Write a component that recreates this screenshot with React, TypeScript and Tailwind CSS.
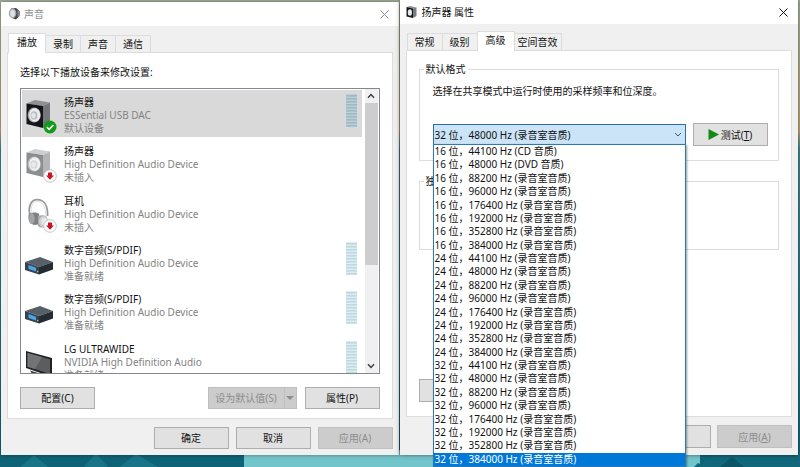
import React from "react";
import clsx from "clsx";

type DeviceKind = "speaker" | "speakerOff" | "headphones" | "box" | "monitor";

type Device = {
  id: number;
  name: string;
  driver: string;
  status: string;
  icon: DeviceKind;
  badge?: "ok" | "unplugged";
  meter?: boolean;
};

const devices: Device[] = [
  { id: 1, name: "扬声器", driver: "ESSential USB DAC", status: "默认设备", icon: "speaker", badge: "ok", meter: true },
  { id: 2, name: "扬声器", driver: "High Definition Audio Device", status: "未插入", icon: "speakerOff", badge: "unplugged" },
  { id: 3, name: "耳机", driver: "High Definition Audio Device", status: "未插入", icon: "headphones", badge: "unplugged" },
  { id: 4, name: "数字音频(S/PDIF)", driver: "High Definition Audio Device", status: "准备就绪", icon: "box", meter: true },
  { id: 5, name: "数字音频(S/PDIF)", driver: "High Definition Audio Device", status: "准备就绪", icon: "box", meter: true },
  { id: 6, name: "LG ULTRAWIDE", driver: "NVIDIA High Definition Audio", status: "准备就绪", icon: "monitor", meter: true },
];

const rates = [44100, 48000, 88200, 96000, 176400, 192000, 352800, 384000];

// 16 位的前两档有专门的音质名称
const qualityOf = (bits: number, rate: number) => {
  if (bits === 16 && rate === 44100) return "CD 音质";
  if (bits === 16 && rate === 48000) return "DVD 音质";
  return "录音室音质";
};

const formats = [16, 24, 32].flatMap((bits) =>
  rates.map((rate) => `${bits} 位，${rate} Hz (${qualityOf(bits, rate)})`)
);

const SpeakerIcon = ({ off }: { off?: boolean }) => (
  <svg viewBox="0 0 32 32" className="h-8 w-8">
    <path d="M0.5 5.5 L9 2 L24 4.5 L17 8Z" fill={off ? "#cfcfcf" : "#8f9194"} />
    <path d="M17 8 L24 4.5 V23 L17 30Z" fill={off ? "#b4b5b7" : "#74777b"} />
    <path d="M0.5 5.5 L17 8 V30 L0.5 26Z" fill={off ? "#8c8d8f" : "#141517"} />
    <ellipse cx="8.2" cy="17" rx="6.6" ry="7.6" fill={off ? "#bdbebf" : "#9fa3a7"} />
    <ellipse cx="8.7" cy="17" rx="5.6" ry="6.8" fill={off ? "#f1f1f1" : "#eceef0"} />
    <ellipse cx="8" cy="17.4" rx="3.4" ry="4.2" fill={off ? "#d3d4d5" : "#b7bbbf"} />
    <ellipse cx="7.6" cy="17.6" rx="2.2" ry="2.8" fill={off ? "#e9e9e9" : "#e2e5e8"} />
  </svg>
);

const HeadphonesIcon = () => (
  <svg viewBox="0 0 32 32" className="h-8 w-8">
    <path d="M4 19 C1.5 8 6 2 12 2.6 C19 3.3 22 10 21.5 19" fill="none" stroke="#999a9b" strokeWidth="1.8" />
    <path d="M5.6 16 C4 9 7.5 4 12 4.4 C17 5 20 11 19.8 19" fill="none" stroke="#dcdcdc" strokeWidth="0.9" />
    <path d="M3 17 C6 15 11 15 13 17 L14 26 C11 29 6 28 4 26 C2 23 2 19 3 17Z" fill="#7f8081" />
    <ellipse cx="5.8" cy="21.5" rx="2.8" ry="5.4" fill="#a3a4a5" />
    <path d="M12 19 C15 17.5 19 18 21 20 L21 29 C18 31 14 31 12 29Z" fill="#a9aaab" />
    <ellipse cx="17.6" cy="24.5" rx="4.6" ry="5.6" fill="#cfd0d1" />
    <ellipse cx="18.2" cy="24.5" rx="2.8" ry="3.8" fill="#e7e7e7" />
  </svg>
);

const BoxIcon = () => (
  <svg viewBox="0 0 32 32" className="h-8 w-8 overflow-visible">
    <path d="M-1 16 L14 11 L27 16 L13 21Z" fill="#566068" />
    <path d="M-1 16 L13 21 V28.5 L-1 24Z" fill="#38424a" />
    <path d="M13 21 L27 16 V23.5 L13 28.5Z" fill="#252b31" />
    <path d="M2.5 19 L10 21.7 V25.4 L2.5 23Z" fill="#4ba6e6" />
    <circle cx="11.6" cy="25.6" r="0.8" fill="#aeb9c1" />
  </svg>
);

const MonitorIcon = () => (
  <svg viewBox="0 0 32 32" className="h-8 w-8">
    <path d="M0 6 L26 13 V32 L0 23Z" fill="#202122" />
    <path d="M1.5 8 L24 14.2 V29 L1.5 21.8Z" fill="#5b5d5f" />
    <path d="M1.5 8 L16 12 L9 24 L1.5 21.8Z" fill="#727476" />
    <path d="M4 25.5 L17 29.5 V32 H8Z" fill="#3a3b3c" />
  </svg>
);

const DeviceIcon = ({ icon }: { icon: DeviceKind }) => {
  const iconMap: Record<DeviceKind, React.ReactNode> = {
    speaker: <SpeakerIcon />,
    speakerOff: <SpeakerIcon off />,
    headphones: <HeadphonesIcon />,
    box: <BoxIcon />,
    monitor: <MonitorIcon />,
  };
  return iconMap[icon];
};

const Badge = ({ kind }: { kind: "ok" | "unplugged" }) => (
  <svg viewBox="0 0 14 14" className="absolute right-px -bottom-1 h-3.5 w-3.5">
    {kind === "ok" ? (
      <>
        <circle cx="7" cy="7" r="6.5" fill="#129a1c" />
        <path d="M3.8 7.2 L6.1 9.4 L10.4 5" fill="none" stroke="#fff" strokeWidth="1.6" />
      </>
    ) : (
      <>
        <circle cx="7" cy="7" r="6.3" fill="#fff" stroke="#b5b5b5" strokeWidth="0.8" />
        <path d="M5 3.4 H9 V6.6 H11 L7 10.8 L3 6.6 H5Z" fill="#cf1220" />
      </>
    )}
  </svg>
);

const Meter = ({ active }: { active?: boolean }) => (
  <svg viewBox="0 0 11 33" className="h-[33px] w-[11px] shrink-0">
    <rect width="11" height="33" fill={active ? "#b9d0d6" : "#dfedf1"} />
    {Array.from({ length: 11 }, (_, i) => (
      <rect key={i} y={i * 3 + 1} width="11" height="1.6" fill={active ? "#9fbac2" : "#bddae2"} />
    ))}
  </svg>
);

const CloseIcon = () => (
  <svg viewBox="0 0 9 9" className="h-[9px] w-[9px]">
    <path d="M0.5 0.5 L8.5 8.5 M8.5 0.5 L0.5 8.5" stroke="currentColor" strokeWidth="1" />
  </svg>
);

const Chevron = ({ up }: { up?: boolean }) => (
  <svg viewBox="0 0 8 6" className="h-1.5 w-2">
    <path
      d={up ? "M1 4.8 L4 1.6 L7 4.8" : "M1 1.2 L4 4.4 L7 1.2"}
      fill="none"
      stroke="#404040"
      strokeWidth="1.5"
    />
  </svg>
);

type ButtonProps = React.ButtonHTMLAttributes<HTMLButtonElement>;

const DialogButton = ({ className, disabled, ...props }: ButtonProps) => (
  <button
    type="button"
    disabled={disabled}
    className={clsx(
      "flex min-w-[75px] items-center justify-center border whitespace-nowrap",
      disabled ? "border-[#bfbfbf] bg-[#cccccc] text-[#8c8c8c]" : "border-[#adadad] bg-[#e1e1e1]",
      className
    )}
    {...props}
  />
);

const Tabs = ({ items, active }: { items: string[]; active: string }) => (
  <div role="tablist" className="flex h-[26px] items-end pl-px">
    {items.map((item) => (
      <button
        key={item}
        type="button"
        role="tab"
        aria-selected={item === active}
        className={clsx(
          "border border-b-0 border-[#dcdcdc] not-first:-ml-px",
          item === active ? "relative -mb-px h-5 bg-white pb-[3px]" : "h-[17px] bg-[#f0f0f0]",
          item === active && "px-2",
          item !== active && (item.length > 2 ? "px-[3px]" : "px-[7px]")
        )}
      >
        {item}
      </button>
    ))}
  </div>
);

const SoundWindow = () => (
  <section className="mt-0.5 ml-px flex flex-col bg-[#f0f0f0] shadow-[0_0_4px_#00000066]">
    <header className="flex h-6 items-center gap-0.5 bg-white px-[7px] text-[#8f8f8f]">
      <svg viewBox="0 0 14 14" className="h-3.5 w-3.5">
        <path d="M3 1.5 L8 1 L11.5 4 V9 L8 12.5 L4 11Z" fill="#3f4347" />
        <ellipse cx="4.6" cy="6.3" rx="3.8" ry="5" fill="#a4a8ac" />
        <ellipse cx="4.6" cy="6.3" rx="2.4" ry="3.6" fill="#dfe2e4" />
        <path d="M9.5 2.5 L12 5 V8 L9.5 10.5Z" fill="#85898d" />
      </svg>
      <h1 className="flex-1">声音</h1>
      <button type="button" aria-label="关闭" className="mr-[3px]">
        <CloseIcon />
      </button>
    </header>

    <div className="flex flex-col px-1.5 pb-1.5">
      <Tabs items={["播放", "录制", "声音", "通信"]} active="播放" />
      <div className="border border-[#dcdcdc] bg-white px-3 pt-3 pb-[9px]">
        <p className="leading-[14px]">选择以下播放设备来修改设置:</p>

        <div className="mt-[9px] flex h-[286px] overflow-hidden border border-[#828790]">
          <ul className="grid h-[297px] flex-1 grid-rows-6 pt-px pl-px">
            {devices.map((device) => (
              <li key={device.id} className="pb-0.5">
                <div
                  className={clsx(
                    "flex h-full items-start gap-1.5 pt-1 pr-[5px] pl-1",
                    device.badge === "ok" && "bg-[#d9d9d9]"
                  )}
                >
                  <div className="relative mt-1">
                    <DeviceIcon icon={device.icon} />
                    {device.badge && <Badge kind={device.badge} />}
                  </div>
                  <div className="mt-0.5 flex-1 leading-[13px] text-[#838383]">
                    <p className="text-[#111111]">{device.name}</p>
                    <p>{device.driver}</p>
                    <p>{device.status}</p>
                  </div>
                  {device.meter && <Meter active={device.badge === "ok"} />}
                </div>
              </li>
            ))}
          </ul>
          <div className="mr-px ml-[3px] flex w-[13px] flex-col bg-[#f0f0f0]">
            <span className="flex h-3.5 items-center justify-center">
              <Chevron up />
            </span>
            <span className="h-[162px] bg-[#cdcdcd]" />
            <span className="mt-auto flex h-3.5 items-center justify-center">
              <Chevron />
            </span>
          </div>
        </div>

        <div className="mt-[13px] flex h-[22px] gap-2">
          <DialogButton>配置(C)</DialogButton>
          <div className="ml-auto flex">
            <DialogButton disabled className="w-[77px]">
              设为默认值(S)
            </DialogButton>
            <button
              type="button"
              disabled
              aria-label="更多"
              className="-ml-px flex w-[13px] items-center justify-center border border-[#bfbfbf] bg-[#cccccc]"
            >
              <svg viewBox="0 0 8 4" className="h-1 w-2">
                <path d="M0 0 H8 L4 4Z" fill="#8c8c8c" />
              </svg>
            </button>
          </div>
          <DialogButton>属性(P)</DialogButton>
        </div>
      </div>

      <div className="mt-2 flex h-[22px] justify-end gap-[7px]">
        <DialogButton>确定</DialogButton>
        <DialogButton>取消</DialogButton>
        <DialogButton disabled>应用(A)</DialogButton>
      </div>
    </div>
  </section>
);

const FormatSelect = () => (
  <div className="relative w-[253px]">
    <button
      type="button"
      role="combobox"
      aria-expanded="true"
      aria-controls="formats"
      aria-labelledby="format-label"
      className="flex h-[21px] w-full items-center justify-between border border-[#2a6fa8] bg-[#cce4f7] px-px"
    >
      32 位，48000 Hz (录音室音质)
      <svg viewBox="0 0 8 6" className="mr-0.5 h-1.5 w-2">
        <path d="M1 1 L4 4 L7 1" fill="none" stroke="#3c5a75" strokeWidth="1" />
      </svg>
    </button>
    <ul
      id="formats"
      role="listbox"
      className="absolute top-5 left-0 z-10 grid h-[323px] w-full auto-rows-fr border border-[#2a7ab8] bg-white leading-[13px] shadow-[1px_1px_2px_#00000066]"
    >
      {formats.map((format, i) => (
        <li
          key={format}
          role="option"
          aria-selected={i === formats.length - 1}
          className={clsx("px-px", i === formats.length - 1 && "bg-[#0078d7] text-white")}
        >
          {format}
        </li>
      ))}
    </ul>
  </div>
);

const PropertiesWindow = () => (
  <section className="flex flex-col bg-[#f0f0f0] shadow-[0_0_4px_#00000088]">
    <header className="flex h-6 items-center gap-1 bg-white px-1.5">
      <svg viewBox="0 0 12 12" className="h-3 w-3">
        <path d="M0.5 1 L4 0 L10.5 1.5 L7 2.5Z" fill="#8b8d90" />
        <path d="M7 2.5 L10.5 1.5 V10 L7 12Z" fill="#777a7e" />
        <path d="M0.5 1 L7 2.5 V12 L0.5 10.5Z" fill="#17181a" />
        <ellipse cx="3.9" cy="6.5" rx="2.1" ry="3.2" fill="#e6e8ea" />
      </svg>
      <h1 className="flex-1">扬声器 属性</h1>
      <button type="button" aria-label="关闭" className="mr-1">
        <CloseIcon />
      </button>
    </header>

    <div className="flex flex-col px-1.5 pb-[7px]">
      <Tabs items={["常规", "级别", "高级", "空间音效"]} active="高级" />
      <div className="flex h-[367px] flex-col border border-[#dcdcdc] bg-white px-3 pt-[11px] pb-3.5">
        <fieldset className="border border-[#dcdcdc] pt-2 pr-2 pb-3.5 pl-[13px]">
          <legend className="-ml-[9px] px-0.5 leading-[14px]">默认格式</legend>
          <p id="format-label" className="leading-[14px]">
            选择在共享模式中运行时使用的采样频率和位深度。
          </p>
          <div className="mt-[25px] flex items-center gap-[7px]">
            <FormatSelect />
            <DialogButton className="h-[23px] gap-0.5">
              <svg viewBox="0 0 11 11" className="h-[11px] w-[11px]">
                <path d="M0.5 0 L11 5.5 L0.5 11Z" fill="#128a12" />
              </svg>
              <span>
                测试(<u>T</u>)
              </span>
            </DialogButton>
          </div>
        </fieldset>
        <fieldset className="mt-[13px] h-[76px] border border-[#dcdcdc] pl-[13px]">
          <legend className="-ml-[9px] px-0.5 leading-[14px]">独占模式</legend>
        </fieldset>
        <DialogButton aria-label="还原默认值" className="mt-auto h-[23px] w-[90px]" />
      </div>

      <div className="mt-2 flex h-[23px] justify-end gap-1.5">
        <DialogButton>确定</DialogButton>
        <DialogButton>取消</DialogButton>
        <DialogButton disabled>
          应用(<u>A</u>)
        </DialogButton>
      </div>
    </div>
  </section>
);

const Wallpaper = () => (
  <svg
    viewBox="0 0 800 467"
    preserveAspectRatio="none"
    className="absolute inset-0 -z-10 h-full w-full"
    aria-hidden="true"
  >
    <defs>
      <linearGradient id="sky" x1="0" y1="0" x2="0" y2="1">
        <stop offset="0" stopColor="#a3b09a" />
        <stop offset="0.28" stopColor="#b9a878" />
        <stop offset="0.32" stopColor="#3f8790" />
        <stop offset="1" stopColor="#0f6478" />
      </linearGradient>
    </defs>
    <rect width="800" height="467" fill="url(#sky)" />
    <rect y="450" width="244" height="17" fill="#0f6377" />
    <path d="M20 467 L34 455 L48 467Z M84 467 L96 453 L108 467Z M120 467 L136 454 L158 467Z" fill="#1a7488" />
    <rect x="244" y="450" width="456" height="17" fill="#72c5cb" />
    <path d="M694 467 L698 463 L702 465 L706 458 L710 460 L712 450 H800 V467Z" fill="#11687b" />
    <path d="M720 467 L732 457 L744 467Z" fill="#0b5567" />
  </svg>
);

export default function App() {
  return (
    <main className="relative isolate min-h-screen overflow-hidden font-['Noto_Sans','Noto_Sans_CJK_SC',sans-serif] text-[10px] leading-[14px] text-[#111111]">
      <Wallpaper />
      <div className="grid grid-cols-2 items-start gap-px pr-0.5 pb-2.5">
        <SoundWindow />
        <PropertiesWindow />
      </div>
    </main>
  );
}
